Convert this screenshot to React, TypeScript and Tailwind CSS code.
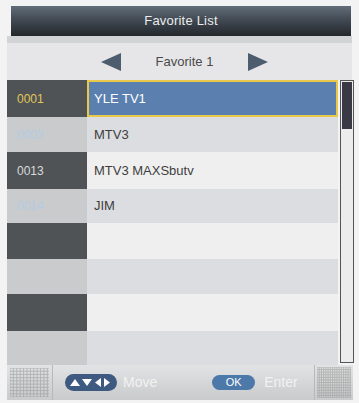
import React from 'react';

type Row = { num: string; name: string };

const rows: Row[] = [
  { num: '0001', name: 'YLE TV1' },
  { num: '0003', name: 'MTV3' },
  { num: '0013', name: 'MTV3 MAXSbutv' },
  { num: '0014', name: 'JIM' },
  { num: '', name: '' },
  { num: '', name: '' },
  { num: '', name: '' },
  { num: '', name: '' },
];

const heights = ['h-[37px]', 'h-[35px]', 'h-[37px]', 'h-[34px]', 'h-[36px]', 'h-[35px]', 'h-[37px]', 'h-[34px]'];

function GridBox({ dense }: { dense?: boolean }) {
  const step = dense ? 3 : 4;
  const lines = [];
  for (let i = 0; i <= 36; i += step) {
    lines.push(<line key={'h' + i} x1={0} y1={i} x2={46} y2={i} stroke="#9a9a9a" strokeWidth={1} />);
  }
  for (let i = 0; i <= 46; i += step) {
    lines.push(<line key={'v' + i} x1={i} y1={0} x2={i} y2={36} stroke="#9a9a9a" strokeWidth={1} />);
  }
  return (
    <svg width="100%" height="100%" viewBox="0 0 46 36" preserveAspectRatio="none" className="opacity-70">
      {lines}
    </svg>
  );
}

export default function App() {
  return (
    <div
      className="w-[359px] h-[403px] bg-[#f3f3f3] overflow-hidden pt-[6px]"
      style={{ fontFamily: '"Liberation Sans", Arial, sans-serif' }}
    >
      {/* title */}
      <div className="ml-[11px] w-[340px] h-[30px] bg-gradient-to-b from-[#626d79] via-[#3f4750] to-[#24282c] flex items-center justify-center">
        <span className="text-[13px] text-[#ececec] tracking-[0.2px]">Favorite List</span>
      </div>

      {/* sub header */}
      <div className="ml-[7px] w-[345px] h-[7px] bg-[#d2d3d5]" />
      <div className="ml-[7px] w-[345px] h-[37px] bg-[#e6e6e8] flex items-center">
        <div className="w-[93px]" />
        <svg width="22" height="20" viewBox="0 0 22 20">
          <polygon points="21,1 21,19 1,10" fill="#4d5d6e" />
        </svg>
        <span className="w-[125px] text-center text-[13px] text-[#4a4a4a]">Favorite 1</span>
        <svg width="22" height="20" viewBox="0 0 22 20">
          <polygon points="1,1 1,19 21,10" fill="#4d5d6e" />
        </svg>
      </div>

      {/* list */}
      <div className="ml-[7px] flex h-[285px]">
        <div className="flex flex-col w-[331px]">
          {rows.map((r, i) => {
            const dark = i % 2 === 0;
            const selected = i === 0;
            return (
              <div key={i} className={`flex ${heights[i]}`}>
                <div
                  className={`w-[80px] flex items-center pl-[10px] text-[12px] ${
                    dark ? 'bg-[#4f5356]' : 'bg-[#c9cbcd]'
                  } ${selected ? 'text-[#e3c75a]' : dark ? 'text-[#d8dadc]' : 'text-[#b4cbe2]'}`}
                >
                  {r.num}
                </div>
                {selected ? (
                  <div className="flex-1 flex items-center pl-[5px] bg-[#5b7fae] border-2 border-[#e8c94a] text-[13px] text-white">
                    {r.name}
                  </div>
                ) : (
                  <div
                    className={`flex-1 flex items-center pl-[7px] text-[13px] text-[#3e3e3e] ${
                      dark ? 'bg-[#efefef]' : 'bg-[#dcdde0]'
                    }`}
                  >
                    {r.name}
                  </div>
                )}
              </div>
            );
          })}
        </div>
        {/* scrollbar */}
        <div className="ml-[2px] w-[14px] h-[283px] border border-[#555] bg-[#ececec] p-[1px]">
          <div className="w-full h-[47px] bg-[#393a45]" />
        </div>
      </div>

      {/* bottom bar */}
      <div className="ml-[7px] w-[346px] h-[35px] bg-gradient-to-b from-[#e2e3e4] to-[#c9cacb] flex items-center">
        <div className="w-[45px] h-[35px] p-[3px]">
          <GridBox />
        </div>
        <div className="w-px h-[35px] bg-[#b8b8b8]" />
        <div className="ml-[12px] w-[52px] h-[17px] rounded-full bg-[#3f5a80] flex items-center justify-center gap-[2px]">
          <svg width="44" height="11" viewBox="0 0 44 11">
            <polygon points="1,9 11,9 6,2" fill="#fff" />
            <polygon points="13,2 23,2 18,9" fill="#fff" />
            <polygon points="32,1 32,10 26,5.5" fill="#fff" />
            <polygon points="35,1 35,10 41,5.5" fill="#fff" />
          </svg>
        </div>
        <span className="ml-[6px] text-[14px] text-[#f2f2f2]">Move</span>
        <div className="ml-[55px] w-[43px] h-[15px] rounded-full bg-[#4c79a9] flex items-center justify-center">
          <span className="text-[11px] text-white">OK</span>
        </div>
        <span className="ml-[9px] text-[14px] text-[#f2f2f2]">Enter</span>
        <div className="ml-auto w-px h-[35px] bg-[#b8b8b8]" />
        <div className="w-[38px] h-[35px] p-[2px]">
          <GridBox dense />
        </div>
      </div>
    </div>
  );
}
